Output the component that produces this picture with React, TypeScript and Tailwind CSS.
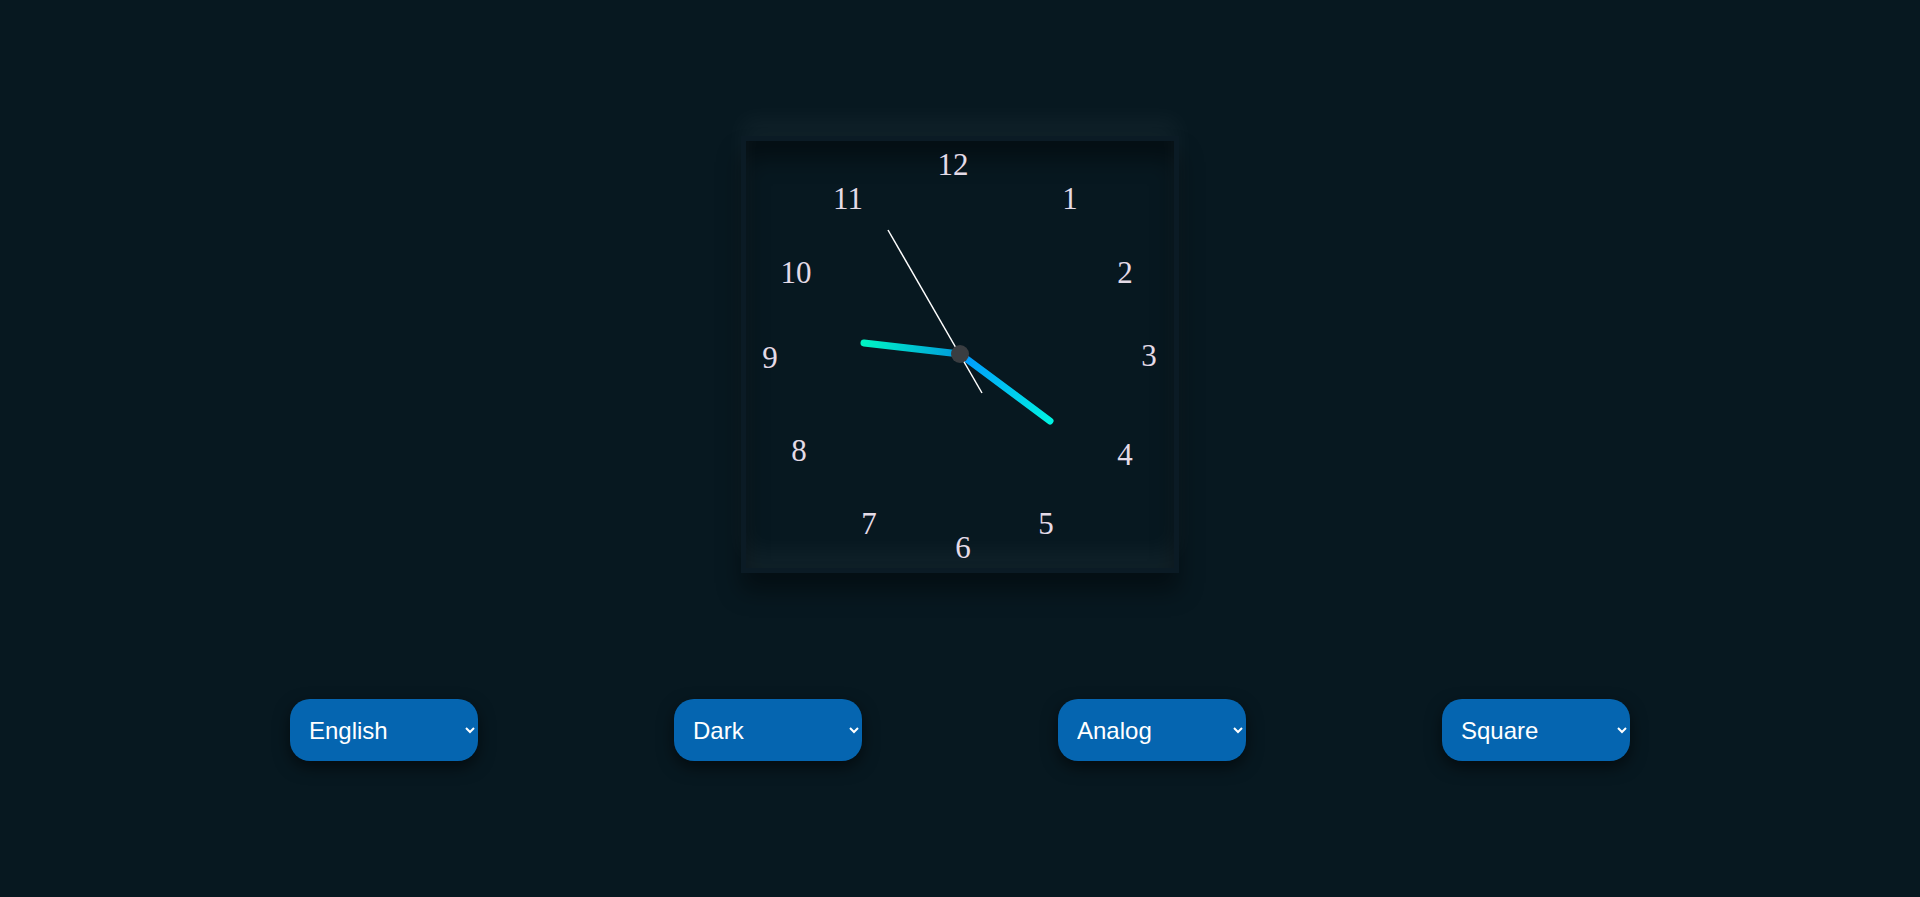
import React from 'react';

// numeral centers, relative to the clock face's padding box
const numerals: { n: number; x: number; y: number }[] = [
  { n: 12, x: 207, y: 23 },
  { n: 1, x: 324, y: 57 },
  { n: 2, x: 379, y: 131 },
  { n: 3, x: 403, y: 214 },
  { n: 4, x: 379, y: 313 },
  { n: 5, x: 300, y: 382 },
  { n: 6, x: 217, y: 406 },
  { n: 7, x: 123, y: 382 },
  { n: 8, x: 53, y: 309 },
  { n: 9, x: 24, y: 216 },
  { n: 10, x: 50, y: 131 },
  { n: 11, x: 102, y: 57 },
];

const CX = 214;
const CY = 213;

function ClockFace() {
  return (
    <div className="relative w-[438px] h-[437px] border-[5px] border-[#0b1b25] bg-[#071820] shadow-[0_-18px_22px_rgba(255,255,255,0.04),0_18px_22px_rgba(0,0,0,0.4),inset_0_-18px_22px_rgba(255,255,255,0.04),inset_0_18px_22px_rgba(0,0,0,0.4)]">
      {numerals.map(({ n, x, y }) => (
        <span
          key={n}
          className="absolute -translate-x-1/2 -translate-y-1/2 leading-none text-[31px] text-[#e4dbe7] font-['Liberation_Serif',serif]"
          style={{ left: x, top: y }}
        >
          {n}
        </span>
      ))}
      <svg className="absolute inset-0" width="428" height="427" viewBox="0 0 428 427">
        <defs>
          <linearGradient id="shortHand" gradientUnits="userSpaceOnUse" x1={CX} y1={CY} x2={118} y2={202}>
            <stop offset="0" stopColor="#0099dd" />
            <stop offset="1" stopColor="#00f5c4" />
          </linearGradient>
          <linearGradient id="longHand" gradientUnits="userSpaceOnUse" x1={CX} y1={CY} x2={304} y2={280}>
            <stop offset="0" stopColor="#0096ff" />
            <stop offset="1" stopColor="#00f2e2" />
          </linearGradient>
        </defs>
        <line x1={CX} y1={CY} x2={118} y2={202} stroke="url(#shortHand)" strokeWidth="7" strokeLinecap="round" />
        <line x1={CX} y1={CY} x2={304} y2={280} stroke="url(#longHand)" strokeWidth="7" strokeLinecap="round" />
        <line x1={142} y1={89} x2={236} y2={252} stroke="#ffffff" strokeWidth="1.5" />
        <circle cx={CX} cy={CY} r="9" fill="#3a3d41" />
      </svg>
    </div>
  );
}

function Picker({ options, value }: { options: string[]; value: string }) {
  return (
    <select
      defaultValue={value}
      className="w-[188px] h-[62px] rounded-[20px] bg-[#0565b0] text-white text-2xl pl-[15px] pr-1 outline-none border-0 font-['Liberation_Sans',Arial,sans-serif] shadow-[0_6px_16px_rgba(0,0,0,0.55)]"
    >
      {options.map(o => (
        <option key={o} value={o}>{o}</option>
      ))}
    </select>
  );
}

export default function App() {
  return (
    <main className="min-h-screen bg-[#071820] flex flex-col items-center pt-[136px]">
      <ClockFace />
      <div className="mt-[126px] flex gap-[196px]">
        <Picker options={['English', 'Español', 'Français']} value="English" />
        <Picker options={['Dark', 'Light']} value="Dark" />
        <Picker options={['Analog', 'Digital']} value="Analog" />
        <Picker options={['Square', 'Round']} value="Square" />
      </div>
    </main>
  );
}
